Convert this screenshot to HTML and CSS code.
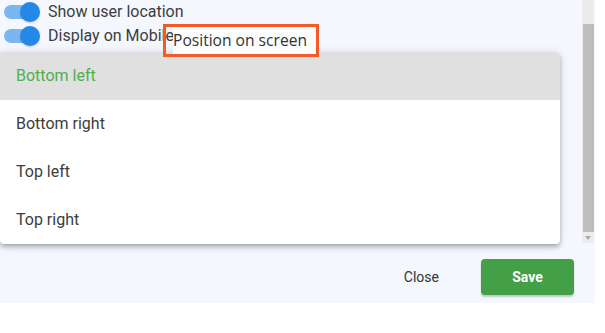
FILE: index.html
```html
<!DOCTYPE html>
<html>
<head>
<meta charset="utf-8">
<link rel="stylesheet" href="styles.css">
</head>
<body>
<div class="dialog">
  <div class="body">
    <div class="content">
      <div class="row">
        <span class="toggle"><span class="track"></span><span class="thumb"></span></span>
        <span class="label">Show user location</span>
      </div>
      <div class="row">
        <span class="toggle"><span class="track"></span><span class="thumb"></span></span>
        <span class="label">Display on Mobile</span>
      </div>
      <ul class="menu">
        <li class="item selected">Bottom left</li>
        <li class="item">Bottom right</li>
        <li class="item">Top left</li>
        <li class="item">Top right</li>
      </ul>
      <div class="callout"><span class="callout-text">Position on screen</span></div>
    </div>
    <div class="scrollbar">
      <div class="sb-top"></div>
      <div class="sb-thumb"></div>
      <div class="sb-arrow"></div>
    </div>
  </div>
  <div class="footer">
    <button class="btn close">Close</button>
    <button class="btn save">Save</button>
  </div>
</div>
</body>
</html>
```
FILE: styles.css
```css
html, body {
  margin: 0;
  padding: 0;
  background: #ffffff;
}
.dialog {
  width: 595px;
  height: 303px;
  background: #f4f7fd;
  display: flex;
  flex-direction: column;
  font-family: Roboto, "Liberation Sans", sans-serif;
}
.body {
  height: 243px;
  display: flex;
}
.content {
  flex: 1;
  position: relative;
}
.row {
  height: 24px;
  display: flex;
  align-items: center;
  gap: 8px;
}
.toggle {
  position: relative;
  width: 40px;
  height: 24px;
  flex: none;
}
.track {
  position: absolute;
  left: 4px;
  top: 5px;
  width: 32px;
  height: 14px;
  border-radius: 7px;
  background: #7ab7f0;
}
.thumb {
  position: absolute;
  left: 20px;
  top: 2px;
  width: 20px;
  height: 20px;
  border-radius: 50%;
  background: #2388e8;
  box-shadow: 0 1px 2px rgba(0,0,0,0.2);
}
.label {
  font-size: 16px;
  color: #3d3d3d;
  line-height: 24px;
}
.callout {
  position: absolute;
  z-index: 2;
  left: 163px;
  top: 24px;
  width: 143px;
  height: 27px;
  border: 3px solid #f25a26;
  padding-left: 7px;
  display: flex;
  align-items: center;
}
.callout-text {
  background: #fbfcfe;
  font-family: "Open Sans", sans-serif;
  font-size: 15.6px;
  color: #333333;
  line-height: 27px;
  flex: 1;
  white-space: nowrap;
  overflow: hidden;
}
.menu {
  position: absolute;
  z-index: 1;
  left: 0;
  top: 52px;
  width: 560px;
  margin: 0;
  padding: 0;
  list-style: none;
  background: #ffffff;
  border-radius: 0 4px 4px 4px;
  box-shadow: 0 2px 4px -1px rgba(0,0,0,0.2), 0 4px 5px 0 rgba(0,0,0,0.14), 0 1px 10px 0 rgba(0,0,0,0.12);
  overflow: hidden;
}
.item {
  height: 48px;
  padding-left: 16px;
  padding-bottom: 2px;
  box-sizing: border-box;
  display: flex;
  align-items: center;
  font-size: 16px;
  color: #3d3d3d;
}
.item.selected {
  background: #e0e0e0;
  color: #4caf50;
}
.scrollbar {
  width: 12px;
  margin-right: 1px;
  background: #ececec;
  display: flex;
  flex-direction: column;
}
.sb-top {
  height: 24px;
}
.sb-thumb {
  height: 208px;
  margin-left: 1px;
  background: #bdbdbd;
}
.sb-arrow {
  align-self: center;
  margin-top: 4px;
  width: 0;
  height: 0;
  border-left: 3px solid transparent;
  border-right: 3px solid transparent;
  border-top: 4px solid #a8a8a8;
}
.footer {
  flex: 1;
  display: flex;
  justify-content: flex-end;
  align-items: flex-start;
  padding: 16px 21px 0 0;
}
.btn {
  height: 36px;
  border: none;
  font-family: Roboto, sans-serif;
  font-size: 14px;
  border-radius: 4px;
  cursor: pointer;
}
.close {
  background: transparent;
  color: #333333;
  font-weight: 400;
  min-width: 64px;
  padding: 0 16px;
  margin-right: 26px;
}
.save {
  width: 93px;
  background: #43a047;
  color: #ffffff;
  font-weight: 700;
  box-shadow: 0 2px 2px rgba(0,0,0,0.2);
}
```
